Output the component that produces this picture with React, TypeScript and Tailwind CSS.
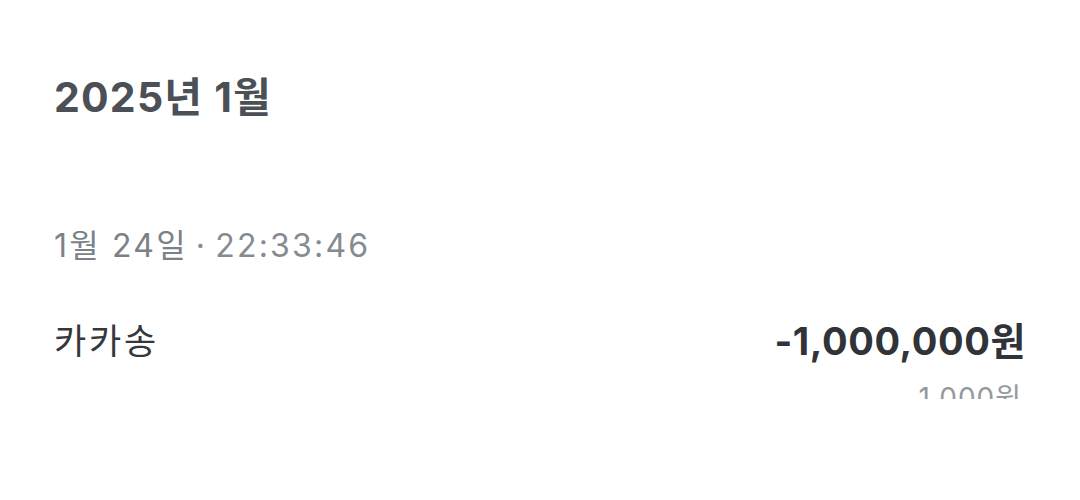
import React from 'react';

const font = { fontFamily: '"Inter", "Noto Sans CJK KR", sans-serif' };

interface TxProps {
  date: string;
  time: string;
  merchant: string;
  amount: string;
  balance: string;
}

const TransactionRow: React.FC<TxProps> = ({ date, time, merchant, amount, balance }) => {
  return (
    <div className="flex flex-col">
      <p className="text-[32px] leading-none tracking-[2.2px] text-[#868b92]">
        <span className="text-[#7c8187]">{date}</span>
        <span className="mx-[8px]">·</span>
        {time}
      </p>
      <div className="mt-[60px] flex items-center justify-between pr-[54px]">
        <span className="text-[35px] leading-none tracking-[2.8px] text-[#34373c]">{merchant}</span>
        <span className="text-[38px] font-bold leading-none tracking-[0.6px] text-[#303338]">{amount}</span>
      </div>
      <div className="mt-[23px] flex justify-end pr-[58px]">
        <div className="h-[16px] overflow-hidden">
          <span className="block text-[28px] leading-[30px] tracking-[1px] text-[#8a8f95] opacity-90">{balance}</span>
        </div>
      </div>
    </div>
  );
};

export default function App() {
  return (
    <div className="h-[500px] w-[1080px] bg-white pl-[54px] pt-[77px]" style={font}>
      <h1 className="text-[41px] font-bold leading-none tracking-[1.2px] text-[#4b5056]">2025년 1월</h1>
      <div className="mt-[112px]">
        <TransactionRow
          date="1월 24일"
          time="22:33:46"
          merchant="카카송"
          amount="-1,000,000원"
          balance="1,000원"
        />
      </div>
    </div>
  );
}
